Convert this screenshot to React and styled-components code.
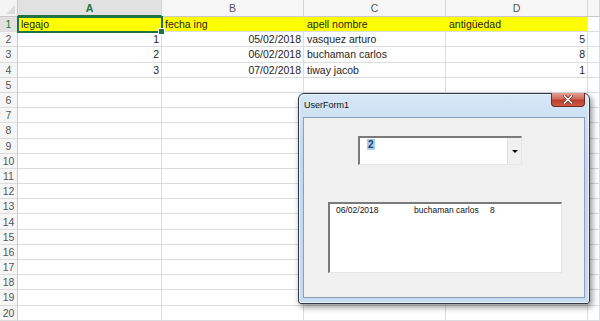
import React from "react";
import styled, { createGlobalStyle } from "styled-components";

const GlobalStyle = createGlobalStyle`
    html, body {
        margin: 0;
        padding: 0;
        background: #ffffff;
    }
    body {
        width: 600px;
        height: 321px;
        overflow: hidden;
        font-family: "Liberation Sans", Arial, sans-serif;
    }
`

const columns = ["A", "B", "C", "D", ""]

const rows = [
    [
        { text: "legajo" },
        { text: "fecha ing" },
        { text: "apell nombre" },
        { text: "antigüedad" },
    ],
    [
        { text: "1", right: true },
        { text: "05/02/2018", right: true },
        { text: "vasquez arturo" },
        { text: "5", right: true },
    ],
    [
        { text: "2", right: true },
        { text: "06/02/2018", right: true },
        { text: "buchaman carlos" },
        { text: "8", right: true },
    ],
    [
        { text: "3", right: true },
        { text: "07/02/2018", right: true },
        { text: "tiway jacob" },
        { text: "1", right: true },
    ],
]

const ROW_COUNT = 20

const Page = styled.div`
    position: relative;
    width: 600px;
    height: 321px;
    overflow: hidden;
`

const Sheet = styled.div`
    display: grid;
    grid-template-columns: 18px 144px 142px 142px 142px 1fr;
    grid-template-rows: 17px repeat(${ROW_COUNT}, 15.2px);
    font-size: 10.5px;
    line-height: 12px;
    color: #1e1e1e;
`

const Corner = styled.div`
    position: relative;
    background: #f4f4f4;
    border-right: 1px solid #c9c9c9;
    border-bottom: 1px solid #c9c9c9;

    &::after {
        content: "";
        position: absolute;
        right: 2px;
        bottom: 2px;
        border-left: 9px solid transparent;
        border-bottom: 9px solid #dcdcdc;
    }
`

const ColHead = styled.div`
    display: flex;
    align-items: center;
    justify-content: center;
    background: ${p => p.active ? "#e1e1e1" : "#f6f6f6"};
    color: ${p => p.active ? "#217346" : "#555555"};
    font-weight: ${p => p.active ? "bold" : "normal"};
    font-size: 10.5px;
    border-right: 1px solid #d5d5d5;
    border-bottom: ${p => p.active ? "2px solid #217346" : "1px solid #c9c9c9"};
`

const RowHead = styled.div`
    display: flex;
    align-items: center;
    justify-content: center;
    background: ${p => p.active ? "#e1e1e1" : "#f6f6f6"};
    color: ${p => p.active ? "#217346" : "#555555"};
    font-size: 10.5px;
    border-right: 1px solid #c9c9c9;
    border-bottom: 1px solid #dcdcdc;
`

const Cell = styled.div`
    position: relative;
    z-index: ${p => p.selected ? 1 : 0};
    display: flex;
    align-items: center;
    justify-content: ${p => p.right ? "flex-end" : "flex-start"};
    padding: 0 2px 0 3px;
    white-space: nowrap;
    overflow: visible;
    background: ${p => p.fill ? "#ffff00" : "#ffffff"};
    border-right: 1px solid ${p => p.fill ? "#ffff00" : "#dadcdd"};
    border-bottom: 1px solid #dadcdd;
    outline: ${p => p.selected ? "2px solid #217346" : "none"};
    outline-offset: -1px;
`

const Handle = styled.span`
    position: absolute;
    right: -4px;
    bottom: -4px;
    width: 5px;
    height: 5px;
    background: #217346;
    border: 1px solid #ffffff;
    z-index: 2;
`

const Window = styled.div`
    position: absolute;
    left: 298px;
    top: 93px;
    width: 292px;
    height: 211px;
    box-sizing: border-box;
    display: flex;
    flex-direction: column;
    padding: 0 4px 5px 4px;
    border: 1px solid #2f3a46;
    border-radius: 6px 6px 3px 3px;
    background: linear-gradient(180deg, #d6e7f7 0%, #c1d8f0 30%, #c8dcf2 100%);
    box-shadow: 2px 3px 6px rgba(0, 0, 0, 0.45), inset 0 0 0 1px rgba(255, 255, 255, 0.6);
    font-family: "Liberation Sans", Tahoma, sans-serif;
`

const TitleBar = styled.div`
    display: flex;
    justify-content: space-between;
    align-items: flex-start;
    height: 23px;
`

const Title = styled.span`
    padding: 6px 0 0 1px;
    font-size: 9px;
    color: #111111;
`

const CloseButton = styled.div`
    display: flex;
    align-items: center;
    justify-content: center;
    width: 34px;
    height: 14px;
    margin-top: -1px;
    box-sizing: border-box;
    border: 1px solid #6b2a24;
    border-top: none;
    border-radius: 0 0 4px 4px;
    background: linear-gradient(180deg, #e4a093 0%, #d16b5a 45%, #bc3d2b 55%, #cf5b43 100%);
`

const Client = styled.div`
    flex: 1;
    display: flex;
    flex-direction: column;
    align-items: flex-start;
    background: #f0f0f0;
    border: 1px solid #8a9fb8;
`

const Combo = styled.div`
    display: flex;
    width: 164px;
    height: 29px;
    margin: 18px 0 0 54px;
    box-sizing: border-box;
    background: #ffffff;
    border-top: 2px solid #7a7a7a;
    border-left: 2px solid #7a7a7a;
    border-right: 1px solid #e6e6e6;
    border-bottom: 1px solid #e6e6e6;
`

const ComboText = styled.div`
    flex: 1;
    padding: 1px 0 0 7px;
    font-size: 10px;
    font-weight: bold;
`

const Selected = styled.span`
    background: #a9cdee;
    color: #1b3f73;
    padding: 0 1px;
`

const DropButton = styled.div`
    display: flex;
    align-items: center;
    justify-content: center;
    width: 13px;
    background: #f0f0f0;
    border-left: 1px solid #e2e2e2;
`

const Arrow = styled.span`
    width: 0;
    height: 0;
    border-left: 3px solid transparent;
    border-right: 3px solid transparent;
    border-top: 3px solid #000000;
`

const ListBox = styled.div`
    width: 234px;
    height: 71px;
    margin: 37px 0 0 24px;
    box-sizing: border-box;
    background: #ffffff;
    border-top: 2px solid #7a7a7a;
    border-left: 2px solid #7a7a7a;
    border-right: 1px solid #e6e6e6;
    border-bottom: 1px solid #e6e6e6;
`

const ListRow = styled.div`
    display: grid;
    grid-template-columns: 78px 76px 1fr;
    padding: 1px 0 0 6px;
    font-size: 8.5px;
    color: #111111;
`

const Sheets = () => (
    <Sheet>
        <Corner />
        { columns.map((c, i) => (
            <ColHead key={ "h" + i } active={ i === 0 }>{ c }</ColHead>
        )) }
        { Array.from({ length: ROW_COUNT }).map((_, r) => {
            const data = rows[r] || []
            return (
                <React.Fragment key={ r }>
                    <RowHead active={ r === 0 }>{ r + 1 }</RowHead>
                    { columns.map((_, c) => {
                        const cell = data[c] || {}
                        const selected = r === 0 && c === 0
                        return (
                            <Cell key={ c } right={ cell.right } fill={ r === 0 && c < 4 } selected={ selected }>
                                { cell.text }
                                { selected ? <Handle /> : null }
                            </Cell>
                        )
                    }) }
                </React.Fragment>
            )
        }) }
    </Sheet>
)

const UserForm = () => (
    <Window>
        <TitleBar>
            <Title>UserForm1</Title>
            <CloseButton>
                <svg width="10" height="9" viewBox="0 0 10 9">
                    <path d="M1.5 1 L8.5 8 M8.5 1 L1.5 8" stroke="#5a2620" strokeWidth="3" strokeLinecap="square" />
                    <path d="M1.5 1 L8.5 8 M8.5 1 L1.5 8" stroke="#ffffff" strokeWidth="1.6" strokeLinecap="square" />
                </svg>
            </CloseButton>
        </TitleBar>
        <Client>
            <Combo>
                <ComboText><Selected>2</Selected></ComboText>
                <DropButton><Arrow /></DropButton>
            </Combo>
            <ListBox>
                <ListRow>
                    <span>06/02/2018</span>
                    <span>buchaman carlos</span>
                    <span>8</span>
                </ListRow>
            </ListBox>
        </Client>
    </Window>
)

const App = () => (
    <Page>
        <GlobalStyle />
        <Sheets />
        <UserForm />
    </Page>
)

export default App
